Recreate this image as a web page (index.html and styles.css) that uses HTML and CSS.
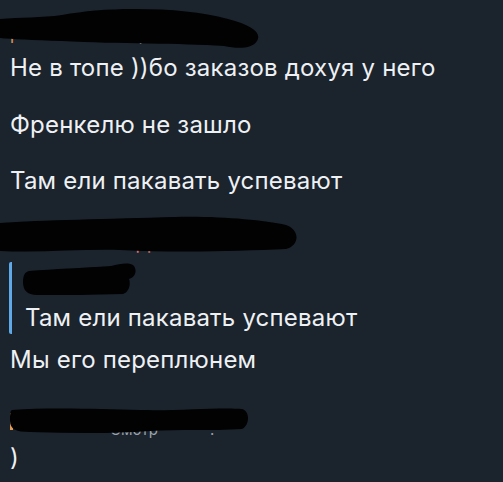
FILE: index.html
```html
<!DOCTYPE html>
<html lang="ru">
<head>
  <meta charset="UTF-8" />
  <meta name="viewport" content="width=device-width, initial-scale=1.0"/>
  <title>Чат</title>
  <link rel="stylesheet" href="styles.css">
</head>
<body>

  <div class="chat">

    <div class="name name-first">
      <span class="nick">Г</span><span class="meta">Смотрит</span>
      <svg class="blot" width="262" height="50" viewBox="0 0 262 50">
        <path d="M0,19 C20,17 42,18 62,15 C85,11 105,9 135,9 C172,9 202,12 228,19 C252,25 262,33 257,41 C252,49 238,49 224,46 C180,43 120,44 62,41 C32,40 12,39 0,38 Z"/>
      </svg>
    </div>

    <p class="text">Не в топе ))бо заказов дохуя у него</p>
    <p class="text spaced">Френкелю не зашло</p>
    <p class="text spaced">Там ели пакавать успевают</p>

    <div class="name name-second">
      <span class="nick red">Д</span>
      <svg class="blot" width="300" height="38" viewBox="0 0 300 38">
        <path d="M0,7 C40,4 110,3 175,1 C220,0 262,4 286,9 C300,14 300,29 286,33 C240,35 180,37 120,34 C80,33 40,37 0,35 Z"/>
      </svg>
    </div>

    <div class="reply">
      <div class="reply-name">
        <svg class="blot" width="114" height="34" viewBox="0 0 114 34">
          <path d="M6,9 C30,7 60,6 88,4 C100,1 110,0 112,6 C114,12 110,16 106,17 C108,22 106,30 100,32 C70,33 40,33 14,33 C4,33 0,28 0,20 C0,13 2,10 6,9 Z"/>
        </svg>
      </div>
      <p class="text reply-text">Там ели пакавать успевают</p>
    </div>

    <p class="text after-reply">Мы его переплюнем</p>

    <div class="name name-third">
      <span class="corner"></span><span class="meta">Смотр</span><span class="meta dot">.</span>
      <svg class="blot" width="240" height="28" viewBox="0 0 240 28">
        <path d="M2,3 C40,0 90,2 130,3 C170,4 210,0 232,2 C240,4 240,18 232,22 C200,24 170,22 140,24 C100,27 60,26 20,25 C6,25 0,22 0,14 C0,8 0,4 2,3 Z"/>
      </svg>
    </div>

    <p class="text">)</p>

  </div>

</body>
</html>
```

FILE: styles.css
```css
body {
  margin: 0;
  background-color: #1b232d;
  color: #eef1f4;
  font-family: Inter, sans-serif;
  overflow: hidden;
}
.chat {
  padding-left: 10px;
}
.text {
  margin: 0;
  font-size: 24px;
  line-height: 28px;
  letter-spacing: 0.2px;
  white-space: nowrap;
}
.spaced {
  margin-top: 28px;
}
.text:nth-of-type(2) {
  margin-top: 29px;
}
.name {
  position: relative;
  font-size: 15px;
}
.nick {
  color: #e49a57;
}
.red {
  color: #e2756d;
}
.meta {
  color: #9aa3ad;
  margin-left: 80px;
}
.blot {
  position: absolute;
  fill: #020203;
  filter: blur(0.6px);
}
.name-first {
  height: 54px;
}
.name-first .nick {
  position: absolute;
  left: 0;
  top: 28px;
}
.name-first .meta {
  position: absolute;
  left: 10px;
  top: 26px;
}
.name-first .blot {
  left: -10px;
  top: 0;
}
.name-second {
  height: 62px;
}
.name-second .nick {
  position: absolute;
  left: 126px;
  top: 38px;
  font-size: 18px;
}
.name-second .blot {
  left: -10px;
  top: 21px;
}
.reply {
  margin-top: 5px;
  border-left: 3px solid #5fa9e8;
  border-radius: 2px;
  padding-left: 13px;
  padding-bottom: 2px;
  margin-left: -1px;
}
.reply-name {
  position: relative;
  height: 42px;
}
.reply-name .blot {
  left: -2px;
  top: 0;
}
.after-reply {
  margin-top: 12px;
}
.name-third {
  height: 70px;
}
.corner {
  position: absolute;
  left: 0;
  top: 39px;
  width: 5px;
  height: 17px;
  border-top: 3px solid #e39b53;
  border-left: 3px solid #e39b53;
  box-sizing: border-box;
}
.name-third .meta {
  position: absolute;
  left: 20px;
  top: 46px;
}
.name-third .dot {
  left: 120px;
}
.name-third .blot {
  left: 0;
  top: 33px;
}
```
